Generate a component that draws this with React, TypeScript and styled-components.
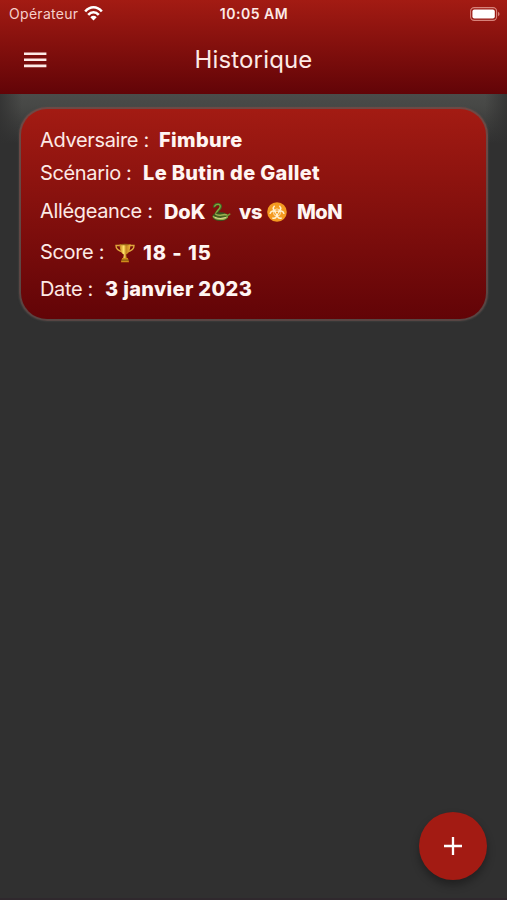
import React from "react";
import styled, { createGlobalStyle } from "styled-components";

const Global = createGlobalStyle`
  * { box-sizing: border-box; }
  body { margin: 0; background: #303030; font-family: Inter, "Liberation Sans", sans-serif; color: #fdeae6; }
`;

const Screen = styled.main`
  position: relative;
  display: flex;
  flex-direction: column;
  height: 900px;
  overflow: hidden;
  background: #303030;
  border-bottom: 2px solid #2f282d;
`;

const Header = styled.header`
  height: 94px;
  flex: none;
  background: linear-gradient(#a31b13, #620407);
`;

const StatusBar = styled.div`
  display: grid;
  grid-template-columns: 1fr auto 1fr;
  align-items: center;
  height: 27px;
  padding: 0 7px 0 9px;
  font-size: 14px;
`;

const Carrier = styled.div`
  display: flex;
  align-items: center;
  gap: 6px;
  color: #f6cfca;
  letter-spacing: 0.3px;
`;

const Clock = styled.div`
  margin-right: 1px;
  font-weight: 600;
  letter-spacing: 0.5px;
`;

const BatterySlot = styled.div`
  display: flex;
  justify-content: flex-end;
`;

const NavBar = styled.div`
  display: grid;
  grid-template-columns: 70px 1fr 70px;
  align-items: center;
  height: 66px;
`;

const MenuButton = styled.button`
  display: flex;
  padding: 0 0 0 24px;
  border: 0;
  background: none;
`;

const Title = styled.h1`
  margin: 0;
  text-align: center;
  font-size: 24px;
  font-weight: 400;
  line-height: 30px;
  letter-spacing: 0.15px;
`;

const Content = styled.section`
  flex: 1;
  padding: 13px 19px;
  background:
    linear-gradient(90deg, #303030cc, transparent 22px, transparent 485px, #303030cc),
    linear-gradient(#4b4c4a, #464745 14px, #303030 50px);
`;

const Card = styled.article`
  height: 214px;
  padding: 16px 19px;
  border: 2px solid transparent;
  border-radius: 28px;
  background:
    linear-gradient(#a31b13, #620407) padding-box,
    linear-gradient(#6e4945, #574543) border-box;
  box-shadow: 0 0 2px #50524f;
`;

const Row = styled.div<{ $height: number }>`
  display: flex;
  align-items: center;
  height: ${(p) => p.$height}px;
  white-space: pre;
`;

const Label = styled.span<{ $width: number }>`
  width: ${(p) => p.$width}px;
  font-size: 20px;
  line-height: 24px;
  letter-spacing: -0.35px;
`;

const Value = styled.strong<{ $width?: number; $drop?: number; $spacing?: number }>`
  width: ${(p) => (p.$width ? `${p.$width}px` : "auto")};
  padding-top: ${(p) => p.$drop ?? 0}px;
  font-size: 20px;
  font-weight: 800;
  line-height: 24px;
  letter-spacing: ${(p) => p.$spacing ?? 0.33}px;
  color: #fff5f2;
`;

const IconSlot = styled.span<{ $width: number }>`
  display: flex;
  width: ${(p) => p.$width}px;
  padding-top: 2px;
`;

const AddButton = styled.button`
  position: absolute;
  right: 20px;
  bottom: 18px;
  display: flex;
  align-items: center;
  justify-content: center;
  width: 68px;
  height: 68px;
  padding: 0;
  border: 0;
  border-radius: 50%;
  background: #a31b13;
  box-shadow: 0 5px 8px #0005;
`;

const Wifi = () => (
  <svg width="19" height="15" viewBox="0 0 19 15" fill="none" stroke="#fff" strokeWidth="2.6">
    <path d="M1.2 5.5C6-.1 13-.1 17.8 5.5M4.2 8.8c3.2-3.5 7.4-3.5 10.6 0" />
    <path d="M6.3 11.2Q9.5 8.4 12.7 11.2L9.5 14.4Z" fill="#fff" stroke="none" />
  </svg>
);

const Battery = () => (
  <svg width="30" height="14" viewBox="0 0 30 14">
    <rect x=".6" y=".6" width="26" height="12.8" rx="3.6" fill="none" stroke="#d7837b" strokeWidth="1.1" />
    <rect x="2.4" y="2.4" width="22.4" height="9.2" rx="2" fill="#fff" />
    <path d="M28 4.7v4.6q1.6-.8 1.6-2.3T28 4.7Z" fill="#d7837b" />
  </svg>
);

const Menu = () => (
  <svg width="23" height="16" viewBox="0 0 23 16" fill="#fde9e6">
    <path d="M0 .4h22.4V3H0ZM0 6.5h22.4v2.6H0ZM0 12.6h22.4v2.6H0Z" />
  </svg>
);

const Snake = () => (
  <svg width="20" height="20" viewBox="0 0 20 20" fill="none" strokeLinecap="round">
    <path d="M3.2 4.5C5.2.6 11.4 2 9.3 5.8 8 8.2 5.2 9.6 5 12.1" stroke="#3d6924" strokeWidth="2.6" />
    <path d="M3.7 4.1C5.7 1 10.6 2.4 8.9 5.6 7.5 8.2 4.9 9.6 4.8 12" stroke="#87a83e" strokeWidth="1.3" />
    <ellipse cx="9.3" cy="14.6" rx="6.7" ry="3.1" fill="#456021" stroke="#385620" strokeWidth="2.6" />
    <path d="M2.5 14.5c2.5 3.3 10.8 3.7 13.7.4M4.5 12c3.3 3.2 8.2-.7 11.2 1" stroke="#9bae4d" strokeWidth="1.6" />
    <path d="M4.2 15.4q5 2 10.4.2" stroke="#dcd58a" strokeWidth="1.1" />
    <path d="M15.7 14.1 18.7 12.1" stroke="#719638" strokeWidth="1.7" />
  </svg>
);

const Biohazard = () => (
  <svg width="20" height="20" viewBox="0 0 20 20">
    <circle cx="10" cy="10" r="9.8" fill="#f49a20" />
    <g fill="none" stroke="#fff0cf" strokeWidth="1.5">
      <path d="M7.6 3.7C5 6.3 6.5 9.5 10 9.5s5-3.2 2.4-5.8" />
      <path d="M7.6 3.7C5 6.3 6.5 9.5 10 9.5s5-3.2 2.4-5.8" transform="rotate(120 10 10.5)" />
      <path d="M7.6 3.7C5 6.3 6.5 9.5 10 9.5s5-3.2 2.4-5.8" transform="rotate(240 10 10.5)" />
      <circle cx="10" cy="10.5" r="3.6" strokeWidth=".8" />
    </g>
    <circle cx="10" cy="10.5" r="1.1" fill="#f49a20" />
  </svg>
);

const Trophy = () => (
  <svg width="20" height="20" viewBox="0 0 20 20">
    <defs>
      <linearGradient id="gold">
        <stop stopColor="#c17a18" />
        <stop offset=".38" stopColor="#ffe568" />
        <stop offset=".6" stopColor="#c48420" />
        <stop offset="1" stopColor="#edb53a" />
      </linearGradient>
    </defs>
    <path d="M5.3 2.5H1Q.8 7.3 8 9M14.7 2.5H19q.2 4.8-7 6.5" fill="none" stroke="#dda63c" strokeWidth="1.4" />
    <path d="M4.6 1h10.8c0 5.4-1.3 9-4.3 10.6l.7 4H8.2l.7-4C5.9 10 4.6 6.4 4.6 1Z" fill="url(#gold)" />
    <path d="M7.2 15h5.6l1.3 4.3H5.9Z" fill="#d08c1a" />
    <path d="M6.4 17.1h7.2" stroke="#76500f" />
    <ellipse cx="10" cy="1.5" rx="5.3" ry=".8" fill="#9c6518" />
  </svg>
);

export default function App() {
  return (
    <Screen>
      <Global />
      <Header>
        <StatusBar>
          <Carrier>Opérateur <Wifi /></Carrier>
          <Clock>10:05 AM</Clock>
          <BatterySlot><Battery /></BatterySlot>
        </StatusBar>
        <NavBar>
          <MenuButton aria-label="Menu"><Menu /></MenuButton>
          <Title>Historique</Title>
        </NavBar>
      </Header>
      <Content>
        <Card>
          <Row $height={30}><Label $width={119}>Adversaire :</Label><Value>Fimbure</Value></Row>
          <Row $height={35}><Label $width={103}>Scénario :</Label><Value>Le Butin de Gallet</Value></Row>
          <Row $height={41}>
            <Label $width={124}>Allégeance :</Label>
            <Value $width={47} $drop={2} $spacing={-0.1}>DoK</Value>
            <IconSlot $width={28}><Snake /></IconSlot>
            <Value $width={28} $drop={2} $spacing={-0.3}>vs</Value>
            <IconSlot $width={30}><Biohazard /></IconSlot>
            <Value $drop={2} $spacing={-0.5}>MoN</Value>
          </Row>
          <Row $height={41}>
            <Label $width={75}>Score :</Label>
            <IconSlot $width={28}><Trophy /></IconSlot>
            <Value $drop={2} $spacing={0.95}>18 - 15</Value>
          </Row>
          <Row $height={33}><Label $width={65}>Date :</Label><Value>3 janvier 2023</Value></Row>
        </Card>
      </Content>
      <AddButton aria-label="Ajouter">
        <svg width="18" height="18" viewBox="0 0 18 18"><path d="M9 0v18M0 9h18" stroke="#fff" strokeWidth="2.3" /></svg>
      </AddButton>
    </Screen>
  );
}
